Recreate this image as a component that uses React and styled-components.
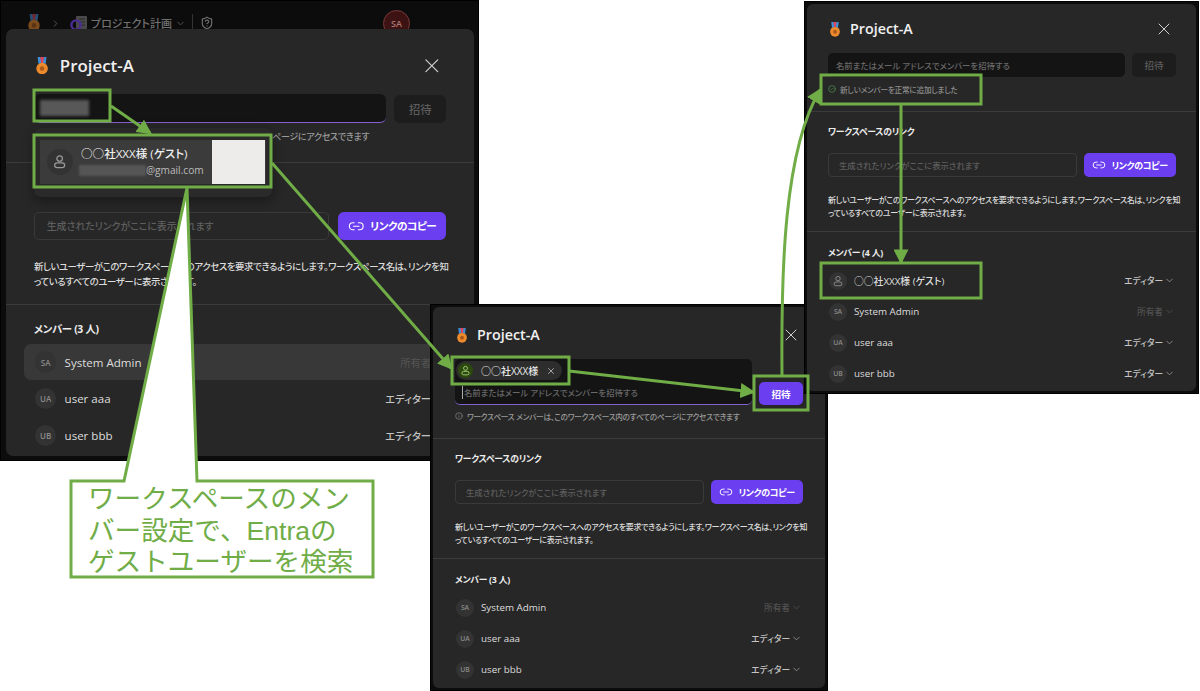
import React from "react";
import styled, { createGlobalStyle } from "styled-components";
import { X, Link2, ChevronDown, ChevronRight, Info, CircleCheck, ShieldQuestion } from "lucide-react";

const GREEN = "#70ad47";

const GlobalStyle = createGlobalStyle`
	html, body {
		margin: 0;
		padding: 0;
		background: #fff;
	}
	* {
		box-sizing: border-box;
	}
	body {
		font-family: "Open Sans", "Noto Sans CJK JP", sans-serif;
		font-feature-settings: "palt";
	}
`;

// slide canvas
const Stage = styled.div`
	position: relative;
	width: 1200px;
	height: 691px;
	overflow: hidden;
	background: #fff;
`;

const Frame = styled.div`
	position: absolute;
	left: ${p => p.$x}px;
	top: ${p => p.$y}px;
	width: ${p => p.$w}px;
	height: ${p => p.$h}px;
	display: flex;
	flex-direction: column;
	padding: 2px;
	background: #0c0c0c;
	border: 1px solid #000;
	overflow: hidden;
`;

const TopBar = styled.div`
	flex: none;
	height: 40px;
	margin-bottom: -14px;
	display: flex;
	align-items: center;
	padding: 0 0 0 24px;
	color: #707070;
	font-size: 11px;
`;

const TopMedal = styled.div`
	display: flex;
	opacity: 0.5;
`;

const TopChevron = styled.div`
	display: flex;
	margin: ${p => p.$margin};
	color: #555;
`;

const TopText = styled.span`
	margin-left: 3px;
	font-weight: 500;
`;

const TopRule = styled.div`
	width: 1px;
	height: 18px;
	margin: 0 7px 0 6px;
	background: #333;
`;

const TopAvatar = styled.div`
	width: 27px;
	height: 27px;
	margin-left: auto;
	margin-right: 66px;
	display: flex;
	align-items: center;
	justify-content: center;
	border-radius: 50%;
	background: #3c1212;
	border: 1px solid #7a3a3a;
	color: #a77;
	font-size: 9px;
	font-weight: 600;
`;

const Modal = styled.div`
	position: relative;
	flex: 1;
	zoom: ${p => p.$zoom || 1};
	margin: ${p => p.$margin || "0"};
	padding: ${p => p.$top}px ${p => p.$right}px 0 ${p => p.$left}px;
	background: #272727;
	border-radius: 6px;
	color: #e4e4e4;
	overflow: hidden;
`;

const Header = styled.div`
	height: 20px;
	display: flex;
	align-items: center;
	padding-left: 1px;
`;

const Title = styled.h2`
	margin: 0 0 0 9px;
	font-size: 14.3px;
	line-height: 20px;
	font-weight: 600;
	color: #f0f0f0;
`;

const CloseButton = styled.div`
	display: flex;
	margin-left: auto;
	margin-right: 2px;
	color: #cfcfcf;
`;

const InviteRow = styled.div`
	position: relative;
	margin-top: 14px;
	display: flex;
	align-items: flex-end;
	gap: 7px;
`;

const InputBox = styled.div`
	flex: 1;
	min-height: 24px;
	padding: 0 8px;
	display: flex;
	flex-direction: column;
	justify-content: flex-end;
	background: #141414;
	border-radius: 5px;
	border-bottom: ${p => (p.$focus ? "1px solid #8560d0" : "none")};
`;

const InputLine = styled.div`
	height: 24px;
	display: flex;
	align-items: center;
	color: #686868;
	font-size: 8.4px;
	font-weight: 500;
`;

const Caret = styled.span`
	width: 1px;
	height: 13px;
	margin: 0 1px 0 -1px;
	background: #aaa;
`;

const BlurredQuery = styled.div`
	width: 42px;
	height: 13px;
	margin-left: -3px;
	background: #585858;
	filter: blur(1.2px);
`;

const Chip = styled.div`
	align-self: flex-start;
	margin: 2px 0 0 -7px;
	height: 19px;
	display: flex;
	align-items: center;
	padding: 0 6px 0 2px;
	border-radius: 10px;
	background: #2d2d2d;
	font-size: 10px;
	font-weight: 500;
	color: #e8e8e8;
`;

const ChipAvatar = styled.div`
	width: 15px;
	height: 15px;
	margin-right: 8px;
	display: flex;
	align-items: center;
	justify-content: center;
	border-radius: 50%;
	background: #2c4a0e;
	color: #a8cc7c;
`;

const ChipClose = styled.div`
	display: flex;
	margin-left: 8px;
	color: #bbb;
`;

const InviteButton = styled.div`
	width: 44px;
	height: ${p => (p.$active ? 23 : 24)}px;
	display: flex;
	align-items: center;
	justify-content: center;
	border-radius: 5px;
	background: ${p => (p.$active ? "#6b3ff0" : "#1d1d1d")};
	color: ${p => (p.$active ? "#fff" : "#5c5c5c")};
	font-size: 9.6px;
	font-weight: ${p => (p.$active ? 700 : 500)};
`;

const Helper = styled.div`
	height: 16px;
	margin-top: ${p => p.$gap || 3}px;
	display: flex;
	align-items: center;
	gap: 4px;
	font-size: 7.6px;
	letter-spacing: -0.2px;
	font-weight: 500;
	white-space: nowrap;
	color: ${p => (p.$plain ? "#8c8c8c" : "#9a9a9a")};
`;

const HelperIcon = styled.div`
	display: flex;
	color: ${p => p.$color || "#8a8a8a"};
`;

const Divider = styled.div`
	height: 1px;
	margin: ${p => p.$gap}px -30px 0;
	background: #3b3b3b;
`;

const SectionTitle = styled.h3`
	height: 16px;
	margin: ${p => p.$gap}px 0 0;
	font-size: 8.8px;
	letter-spacing: -0.25px;
	line-height: 16px;
	font-weight: 700;
	color: #ececec;
`;

const LinkRow = styled.div`
	margin-top: 13px;
	display: flex;
	gap: 7px;
`;

const LinkField = styled.div`
	flex: 1;
	height: 24px;
	display: flex;
	align-items: center;
	padding-left: 10px;
	border: 1px solid #3a3a3a;
	border-radius: 4px;
	color: #5e5e5e;
	font-size: 8.4px;
	font-weight: 500;
`;

const CopyButton = styled.div`
	width: 92px;
	height: 24px;
	display: flex;
	align-items: center;
	justify-content: center;
	gap: 5px;
	border-radius: 5px;
	background: #6b3ff0;
	color: #fff;
	font-size: 9px;
	letter-spacing: -0.4px;
	font-weight: 700;
`;

const Description = styled.p`
	margin: 16px 0 0;
	font-size: 8px;
	letter-spacing: -0.36px;
	line-height: 13px;
	font-weight: 500;
	white-space: nowrap;
	color: #dcdcdc;
`;

const MemberList = styled.div`
	margin: 4px -8px 0;
	display: flex;
	flex-direction: column;
`;

const MemberRow = styled.div`
	height: 31px;
	display: flex;
	align-items: center;
	padding: 0 9px 0 9px;
	border-radius: 6px;
	background: ${p => (p.$hover ? "#383838" : "transparent")};
`;

const Avatar = styled.div`
	width: 18px;
	height: 18px;
	flex: none;
	display: flex;
	align-items: center;
	justify-content: center;
	border-radius: 50%;
	background: #333;
	color: #8a8a8a;
	font-size: 6.8px;
	font-weight: 600;
`;

const MemberName = styled.span`
	margin-left: 7px;
	font-size: 9.8px;
	font-weight: 500;
	color: #dedede;
`;

const Role = styled.div`
	margin-left: auto;
	display: flex;
	align-items: center;
	gap: 1px;
	font-size: 8.7px;
	font-weight: 500;
	color: ${p => (p.$muted ? "#515151" : "#c4c4c4")};
`;

const RoleChevron = styled.div`
	display: flex;
	color: ${p => (p.$muted ? "#4c4c4c" : "#8c8c8c")};
`;

// search result popup of the first panel
const ResultMenu = styled.div`
	position: absolute;
	left: 0;
	top: 29px;
	width: 202px;
	height: 58px;
	padding: 10px 5px 5px;
	border-radius: 6px;
	background: #2a2a2a;
	box-shadow: 0 3px 10px rgba(0, 0, 0, 0.35);
`;

const ResultItem = styled.div`
	height: 37px;
	display: flex;
	align-items: center;
	padding-left: 6px;
	background: #3b3b3b;
`;

const ResultAvatar = styled.div`
	width: 22px;
	height: 22px;
	display: flex;
	align-items: center;
	justify-content: center;
	border-radius: 50%;
	background: #333;
	color: #999;
`;

const ResultText = styled.div`
	margin-left: 7px;
	display: flex;
	flex-direction: column;
	gap: 1px;
`;

const ResultName = styled.span`
	font-size: 9.8px;
	line-height: 14px;
	font-weight: 500;
	color: #eee;
`;

const ResultMail = styled.div`
	display: flex;
	align-items: center;
	font-size: 8.6px;
	line-height: 11px;
	color: #bbb;
`;

const MailBlur = styled.div`
	width: 57px;
	height: 9px;
	margin-left: -2px;
	background: #555;
	filter: blur(1px);
`;

const Masked = styled.div`
	position: absolute;
	right: 6px;
	top: 10px;
	width: 45px;
	height: 37px;
	background: #eeecea;
`;

const Overlay = styled.svg`
	position: absolute;
	left: 0;
	top: 0;
	width: 1200px;
	height: 691px;
	pointer-events: none;
`;

const CalloutText = styled.div`
	position: absolute;
	left: 88px;
	top: 484px;
	width: 272px;
	font-family: "Liberation Sans", "Noto Sans CJK JP", sans-serif;
	font-feature-settings: normal;
	font-size: 26.6px;
	line-height: 31.5px;
	font-weight: 400;
	color: ${GREEN};
`;

const Medal = ({ size = 12 }) => (
	<svg width={size} height={size * 1.25} viewBox="0 0 16 20">
		<path d="M3 0h3.2l1.8 7-4 1z" fill="#3f8fd8" />
		<path d="M13 0H9.8L8 7l4 1z" fill="#3f8fd8" />
		<path d="M6 0h4L9 7H7z" fill="#e0455a" />
		<circle cx="8" cy="13" r="6.5" fill="#ec8a2c" />
		<circle cx="8" cy="13" r="2.6" fill="#a9591c" />
	</svg>
);

const PersonIcon = ({ size = 12 }) => (
	<svg width={size} height={size} viewBox="0 0 16 16" fill="none" stroke="currentColor" strokeWidth="1.3">
		<circle cx="8" cy="4.8" r="2.9" />
		<rect x="2.8" y="9.3" width="10.4" height="5" rx="2.5" />
	</svg>
);

const DocIcon = () => (
	<svg width="18" height="18" viewBox="0 0 18 18">
		<rect x="6" y="2" width="11" height="13" rx="1" fill="#4a4a4a" />
		<path d="M9 5h6M9 8h6M9 11h6" stroke="#2a2a2a" strokeWidth="1.2" />
		<circle cx="6" cy="11" r="4.6" fill="none" stroke="#4a2d94" strokeWidth="2.4" />
	</svg>
);

const members = [
	{ initials: "SA", name: "System Admin", role: "所有者", muted: true },
	{ initials: "UA", name: "user aaa", role: "エディター" },
	{ initials: "UB", name: "user bbb", role: "エディター" },
];

const Member = ({ member, hover }) => (
	<MemberRow $hover={hover}>
		<Avatar>{member.guest ? <PersonIcon /> : member.initials}</Avatar>
		<MemberName>{member.name}</MemberName>
		<Role $muted={member.muted}>
			{member.role}
			<RoleChevron $muted={member.muted}><ChevronDown size={11} /></RoleChevron>
		</Role>
	</MemberRow>
);

const InviteDialog = ({ zoom, margin, top, left, right, focus, chip, active, query, success, list, hoverFirst, menu }) => (
	<Modal $zoom={zoom} $margin={margin} $top={top} $left={left} $right={right}>
		<Header>
			<Medal />
			<Title>Project-A</Title>
			<CloseButton><X size={20} strokeWidth={1.2} /></CloseButton>
		</Header>
		<InviteRow>
			<InputBox $focus={focus}>
				{chip && (
					<Chip>
						<ChipAvatar><PersonIcon size={11} /></ChipAvatar>
						○○社XXX様
						<ChipClose><X size={10} /></ChipClose>
					</Chip>
				)}
				<InputLine>
					{chip && <Caret />}
					{query ? <BlurredQuery /> : "名前またはメール アドレスでメンバーを招待する"}
				</InputLine>
			</InputBox>
			<InviteButton $active={active}>招待</InviteButton>
			{menu && (
				<ResultMenu>
					<ResultItem>
						<ResultAvatar><PersonIcon size={13} /></ResultAvatar>
						<ResultText>
							<ResultName>○○社XXX様 (ゲスト)</ResultName>
							<ResultMail><MailBlur />@gmail.com</ResultMail>
						</ResultText>
					</ResultItem>
					<Masked />
				</ResultMenu>
			)}
		</InviteRow>
		{success ? (
			<Helper $gap={4} $plain>
				<HelperIcon $color="#4f9a4f"><CircleCheck size={8} /></HelperIcon>
				新しいメンバーを正常に追加しました
			</Helper>
		) : (
			<Helper>
				<HelperIcon><Info size={8} /></HelperIcon>
				ワークスペース メンバーは、このワークスペース内のすべてのページにアクセスできます
			</Helper>
		)}
		<Divider $gap={14} />
		<SectionTitle $gap={12}>ワークスペースのリンク</SectionTitle>
		<LinkRow>
			<LinkField>生成されたリンクがここに表示されます</LinkField>
			<CopyButton><Link2 size={14} strokeWidth={1.6} />リンクのコピー</CopyButton>
		</LinkRow>
		<Description>
			新しいユーザーがこのワークスペースへのアクセスを要求できるようにします。ワークスペース名は、リンクを知
			<br />
			っているすべてのユーザーに表示されます。
		</Description>
		<Divider $gap={12} />
		<SectionTitle $gap={13}>メンバー ({list.length} 人)</SectionTitle>
		<MemberList>
			{list.map((m, i) => (
				<Member key={m.name} member={m} hover={hoverFirst && i === 0} />
			))}
		</MemberList>
	</Modal>
);

const Annotations = () => (
	<Overlay viewBox="0 0 1200 691">
		<defs>
			<marker id="head" markerWidth="5" markerHeight="5" refX="4.2" refY="2.5" orient="auto">
				<path d="M0 0L5 2.5L0 5z" fill={GREEN} />
			</marker>
		</defs>
		<g fill="none" stroke={GREEN} strokeWidth="3">
			<path d="M71 481H124L187 188L197 481H373V577H71z" fill="#fff" strokeLinejoin="miter" />
			<rect x="34" y="90" width="76" height="31" />
			<rect x="34" y="135" width="237" height="52" />
			<rect x="452" y="357" width="117" height="27" />
			<rect x="754" y="376" width="54" height="34" />
			<rect x="821" y="75" width="160" height="29" />
			<rect x="821" y="263" width="160" height="35" />
			<path d="M111 106L150 133" markerEnd="url(#head)" />
			<path d="M272 163L451 368" markerEnd="url(#head)" />
			<path d="M569 371L753 392" markerEnd="url(#head)" />
			<path d="M782 375C781 270 784 150 820 90" markerEnd="url(#head)" />
			<path d="M901 104V262" markerEnd="url(#head)" />
		</g>
	</Overlay>
);

export default function App() {
	return (
		<Stage>
			<GlobalStyle />
			<Frame $x={0} $y={0} $w={479} $h={461}>
				<TopBar>
					<TopMedal><Medal size={14} /></TopMedal>
					<TopChevron $margin="0 9px 0 9px"><ChevronRight size={11} /></TopChevron>
					<DocIcon />
					<TopText>プロジェクト計画</TopText>
					<TopChevron $margin="0 0 0 3px"><ChevronDown size={11} /></TopChevron>
					<TopRule />
					<ShieldQuestion size={14} />
					<TopAvatar>SA</TopAvatar>
				</TopBar>
				<InviteDialog
					zoom={1.18}
					margin="0 1.5px 1.5px 2.5px"
					top={21}
					left={23.7}
					right={23.7}
					focus
					query
					menu
					list={members}
					hoverFirst
				/>
			</Frame>
			<Frame $x={430} $y={304} $w={398} $h={387}>
				<InviteDialog top={18} left={22} right={22} focus chip active list={members} />
			</Frame>
			<Frame $x={804} $y={1} $w={395} $h={393}>
				<InviteDialog
					top={15}
					left={21}
					right={20}
					success
					list={[{ initials: "", name: "○○社XXX様 (ゲスト)", role: "エディター", guest: true }, ...members]}
				/>
			</Frame>
			<Annotations />
			<CalloutText>ワークスペースのメンバー設定で、Entraのゲストユーザーを検索</CalloutText>
		</Stage>
	);
}
